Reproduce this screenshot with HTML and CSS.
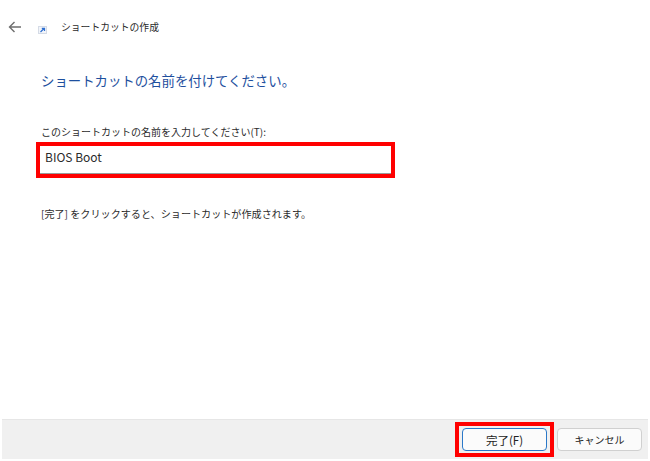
FILE: index.html
```html
<!DOCTYPE html>
<html lang="ja">
<head>
    <meta charset="UTF-8">
    <meta name="viewport" content="width=device-width, initial-scale=1.0">
    <title>ショートカットの作成</title>
    <link rel="stylesheet" href="styles.css">
</head>
<body>
    <div class="wizard">
        <div class="title-bar">
            <svg class="back-icon" width="14" height="12" viewBox="0 0 14 12">
                <path d="M13 6H1.5M6.5 1 1.5 6l5 5" fill="none" stroke="#6e6e6e" stroke-width="1.4"/>
            </svg>
            <svg class="shortcut-icon" width="9" height="8" viewBox="0 0 9 8">
                <rect x="0.5" y="0.5" width="8" height="7" fill="#f2f5fa" stroke="#d5dbe6"/>
                <path d="M2.5 6 6 2.5M3.8 2.3H6.5V5" fill="none" stroke="#2f6fd0" stroke-width="1.2"/>
            </svg>
            <span class="title-text">ショートカットの作成</span>
        </div>

        <div class="content">
            <h1>ショートカットの名前を付けてください。</h1>
            <label class="name-label">このショートカットの名前を入力してください(T):</label>
            <div class="highlight name-box">
                <div class="name-input">BIOS Boot</div>
            </div>
            <p class="hint">[完了] をクリックすると、ショートカットが作成されます。</p>
        </div>

        <div class="footer">
            <div class="highlight finish-box">
                <button class="finish">完了(F)</button>
            </div>
            <button class="cancel">キャンセル</button>
        </div>
    </div>
</body>
</html>
```

FILE: styles.css
```css
html, body {
    margin: 0;
    padding: 0;
    background: #fff;
}
body {
    font-family: "Noto Sans CJK JP", "Liberation Sans", sans-serif;
    color: #1f1f1f;
}
.wizard {
    width: 650px;
    height: 461px;
    display: flex;
    flex-direction: column;
    box-sizing: border-box;
    padding: 0 2px 2px;
}
.title-bar {
    display: flex;
    align-items: center;
    height: 54px;
    padding-left: 6px;
    box-sizing: border-box;
}
.shortcut-icon {
    margin-left: 16px;
    margin-top: 5px;
}
.title-text {
    margin-left: 14px;
    font-size: 9.8px;
    color: #2b2b2b;
}
.content {
    flex: 1;
    padding-left: 34px;
}
h1 {
    margin: 14px 0 0 5px;
    font-size: 13.4px;
    line-height: 24px;
    font-weight: 400;
    color: #1e4f9e;
}
.name-label {
    display: block;
    margin: 32px 0 0 5px;
    font-size: 10px;
    line-height: 16px;
    color: #2b2b2b;
}
.highlight {
    border: 4px solid #f00;
    box-sizing: border-box;
}
.name-box {
    width: 359px;
    height: 36px;
    margin-top: 2px;
}
.name-input {
    height: 28px;
    box-sizing: border-box;
    padding-left: 5px;
    border-bottom: 1px solid #9a9a9a;
    font-size: 12px;
    line-height: 21px;
    color: #2b2b2b;
}
.hint {
    margin: 28px 0 0 5px;
    font-size: 10.1px;
    line-height: 16px;
    color: #2b2b2b;
}
.footer {
    height: 40px;
    display: flex;
    align-items: center;
    justify-content: flex-end;
    padding-right: 6px;
    background: #f0f0f0;
    border-top: 1px solid #e6e6e6;
    box-sizing: border-box;
}
.finish-box {
    width: 99px;
    height: 35px;
    display: flex;
    align-items: center;
    justify-content: center;
    margin-right: 3px;
}
button {
    width: 85px;
    height: 23px;
    padding: 0;
    border-radius: 4px;
    background: #fbfbfb;
    font-family: inherit;
    font-size: 10px;
    color: #222;
}
.finish {
    border: 1px solid #2a78c8;
    font-size: 11.5px;
}
.cancel {
    border: 1px solid #d0d0d0;
}
```
